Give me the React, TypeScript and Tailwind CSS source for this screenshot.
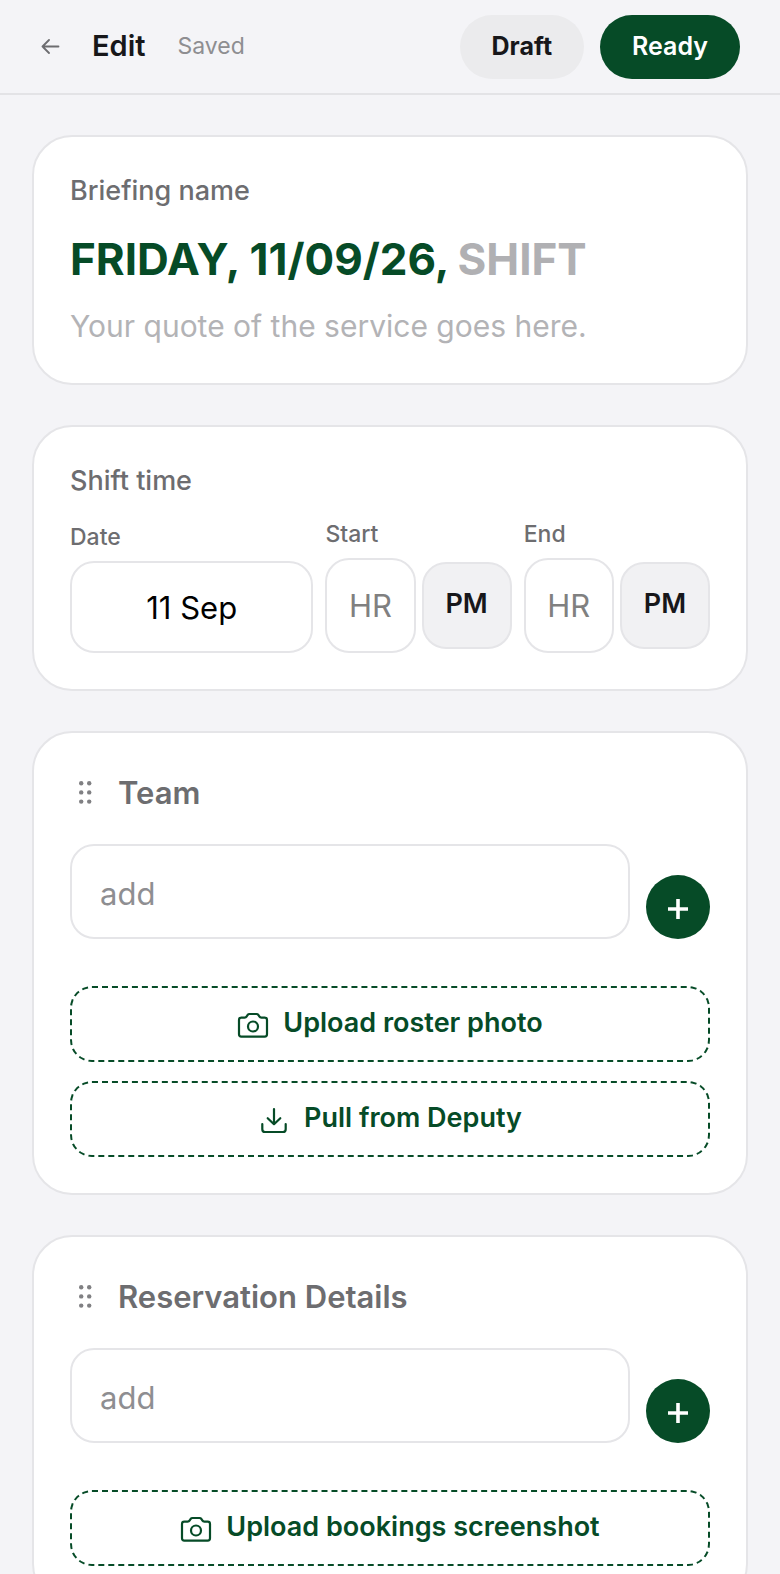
import type { ReactNode } from "react";

function BackArrow() {
  return (
    <svg width="20" height="16" viewBox="0 0 20 16" fill="none" stroke="currentColor" strokeWidth="1.8" strokeLinecap="round" strokeLinejoin="round" aria-hidden="true">
      <path d="M18.5 7.5H2.5M9 1 2.5 7.5 9 14" />
    </svg>
  );
}

function CameraIcon() {
  return (
    <svg className="shrink-0" width="32" height="26" viewBox="0 0 32 26" fill="none" stroke="currentColor" strokeWidth="2.2" strokeLinecap="round" strokeLinejoin="round" aria-hidden="true">
      <path d="M4.3 5.6H7.6Q9 5.6 9.7 4.4L10.6 3Q11.3 2 12.5 2H19.5Q20.7 2 21.4 3L22.3 4.4Q23 5.6 24.4 5.6H27.7Q30 5.6 30 7.9V22.3Q30 24.6 27.7 24.6H4.3Q2 24.6 2 22.3V7.9Q2 5.6 4.3 5.6Z" />
      <circle cx="16" cy="14.5" r="5" />
    </svg>
  );
}

function DownloadIcon() {
  return (
    <svg className="shrink-0" width="32" height="28" viewBox="0 0 32 28" fill="none" stroke="currentColor" strokeWidth="2.2" strokeLinecap="round" strokeLinejoin="round" aria-hidden="true">
      <path d="M16 3V18M9.7 12.2 16 18.2 22.3 12.2M4.3 18V23.2Q4.3 26 7.1 26H24.9Q27.7 26 27.7 23.2V18" />
    </svg>
  );
}

function DragDots() {
  return (
    <svg width="14" height="24" viewBox="0 0 14 24" fill="currentColor" aria-hidden="true">
      {[2.2, 11.4, 20.6].map((y) => (
        <g key={y}>
          <circle cx="3.2" cy={y} r="2.2" />
          <circle cx="11.2" cy={y} r="2.2" />
        </g>
      ))}
    </svg>
  );
}

function PlusIcon() {
  return (
    <svg className="mt-1" width="20" height="20" viewBox="0 0 20 20" stroke="currentColor" strokeWidth="3.6" aria-hidden="true">
      <path d="M10 0V20M0 10H20" />
    </svg>
  );
}

function Card({ children }: { children: ReactNode }) {
  return <section className="rounded-[40px] border-2 border-[#e5e5e8] bg-white p-9">{children}</section>;
}

function TimeField({ id, label }: { id: string; label: string }) {
  return (
    <div className="min-w-0 flex-[186]">
      <label htmlFor={id} className="block text-[23px] leading-7 font-medium text-[#6d6d70]">
        {label}
      </label>
      <div className="mt-2.5 flex items-center gap-1.5">
        <input id={id} placeholder="HR" className="h-[95px] w-0 min-w-0 flex-1 rounded-3xl border-2 border-[#e5e5e8] bg-white text-center text-[31px] text-black outline-none placeholder:text-[#808080]" />
        <button type="button" className="h-[87px] min-w-0 flex-1 rounded-3xl border-2 border-[#e5e5e8] bg-[#f1f1f3] pb-0.5 text-[27px] font-semibold text-[#17171a]">
          PM
        </button>
      </div>
    </div>
  );
}

function UploadButton({ icon, children }: { icon: ReactNode; children: ReactNode }) {
  return (
    <button type="button" className="flex h-[76px] w-full items-center justify-center gap-3.5 rounded-[22px] border-2 border-dashed border-[#064b27] text-[27px] font-semibold text-[#064b27]">
      <span className="pt-0.5">{icon}</span>
      <span className="pb-0.5">{children}</span>
    </button>
  );
}

function ListCard({ id, title, children }: { id: string; title: string; children: ReactNode }) {
  return (
    <Card>
      <div className="flex h-12 items-center">
        <button type="button" aria-label={`Reorder ${title}`} className="flex w-12 pl-2 text-[#808083]">
          <DragDots />
        </button>
        <h2 className="text-[31px] font-semibold text-[#6d6d70]">{title}</h2>
      </div>
      <div className="mt-[27px] flex items-end gap-4">
        <input id={id} aria-label={`Add to ${title}`} placeholder="add" className="h-[95px] min-w-0 flex-1 rounded-3xl border-2 border-[#e5e5e8] bg-white px-7 pt-1 text-[31px] text-black outline-none placeholder:text-[#8e8e91]" />
        <button type="button" aria-label={`Add ${title} entry`} className="flex size-16 shrink-0 items-center justify-center rounded-full bg-[#064b27] text-white">
          <PlusIcon />
        </button>
      </div>
      <div className="mt-[47px] flex flex-col gap-[19px]">{children}</div>
    </Card>
  );
}

export default function App() {
  return (
    <div className="min-h-screen bg-[#f4f4f7] font-[Inter,sans-serif]">
      <header className="sticky top-0 flex items-center border-b-2 border-[#e3e3e6] bg-[#f4f4f7] pt-[15px] pr-10 pb-[14px] pl-10">
        <button type="button" aria-label="Back" className="text-[#6d6d70]">
          <BackArrow />
        </button>
        <h1 className="ml-8 pb-0.5 text-[29px] font-semibold text-[#17171a]">Edit</h1>
        <span className="ml-8 pb-0.5 text-[23px] text-[#8e8e91]">Saved</span>
        <div className="ml-auto flex gap-4">
          <button type="button" className="h-16 rounded-full bg-[#ebebed] px-8 text-[25px] font-bold text-[#17171a]">
            Draft
          </button>
          <button type="button" className="h-16 rounded-full bg-[#064b27] px-8 text-[25px] font-semibold text-white">
            Ready
          </button>
        </div>
      </header>

      <main className="flex flex-col gap-10 px-8 py-10">
        <Card>
          <label htmlFor="briefing-name" className="block text-[27px] leading-9 font-medium text-[#6d6d70]">
            Briefing name
          </label>
          <div className="mt-5 flex h-[60px] items-center gap-2 text-[44px] font-bold">
            <span className="shrink-0 text-[#064b27]">FRIDAY, 11/09/26,</span>
            <input id="briefing-name" placeholder="SHIFT" className="w-0 min-w-0 flex-1 bg-transparent text-[#064b27] outline-none placeholder:text-[#b0b0b3]" />
          </div>
          <input aria-label="Quote" placeholder="Your quote of the service goes here." className="mt-4 block h-[42px] w-full bg-transparent text-[30px] text-black outline-none placeholder:text-[#b3b3b6]" />
        </Card>

        <Card>
          <h2 className="text-[27px] leading-9 font-medium text-[#6d6d70]">Shift time</h2>
          <div className="mt-[21px] flex items-end gap-3">
            <div className="min-w-0 flex-[243]">
              <label htmlFor="shift-date" className="block text-[23px] leading-7 font-medium text-[#6d6d70]">
                Date
              </label>
              <input id="shift-date" defaultValue="11 Sep" className="mt-2.5 block h-[92px] w-full rounded-3xl border-2 border-[#e5e5e8] bg-white text-center text-[31px] text-black outline-none" />
            </div>
            <TimeField id="start-hour" label="Start" />
            <TimeField id="end-hour" label="End" />
          </div>
        </Card>

        <ListCard id="team-entry" title="Team">
          <UploadButton icon={<CameraIcon />}>Upload roster photo</UploadButton>
          <UploadButton icon={<DownloadIcon />}>Pull from Deputy</UploadButton>
        </ListCard>

        <ListCard id="reservation-entry" title="Reservation Details">
          <UploadButton icon={<CameraIcon />}>Upload bookings screenshot</UploadButton>
        </ListCard>
      </main>
    </div>
  );
}
